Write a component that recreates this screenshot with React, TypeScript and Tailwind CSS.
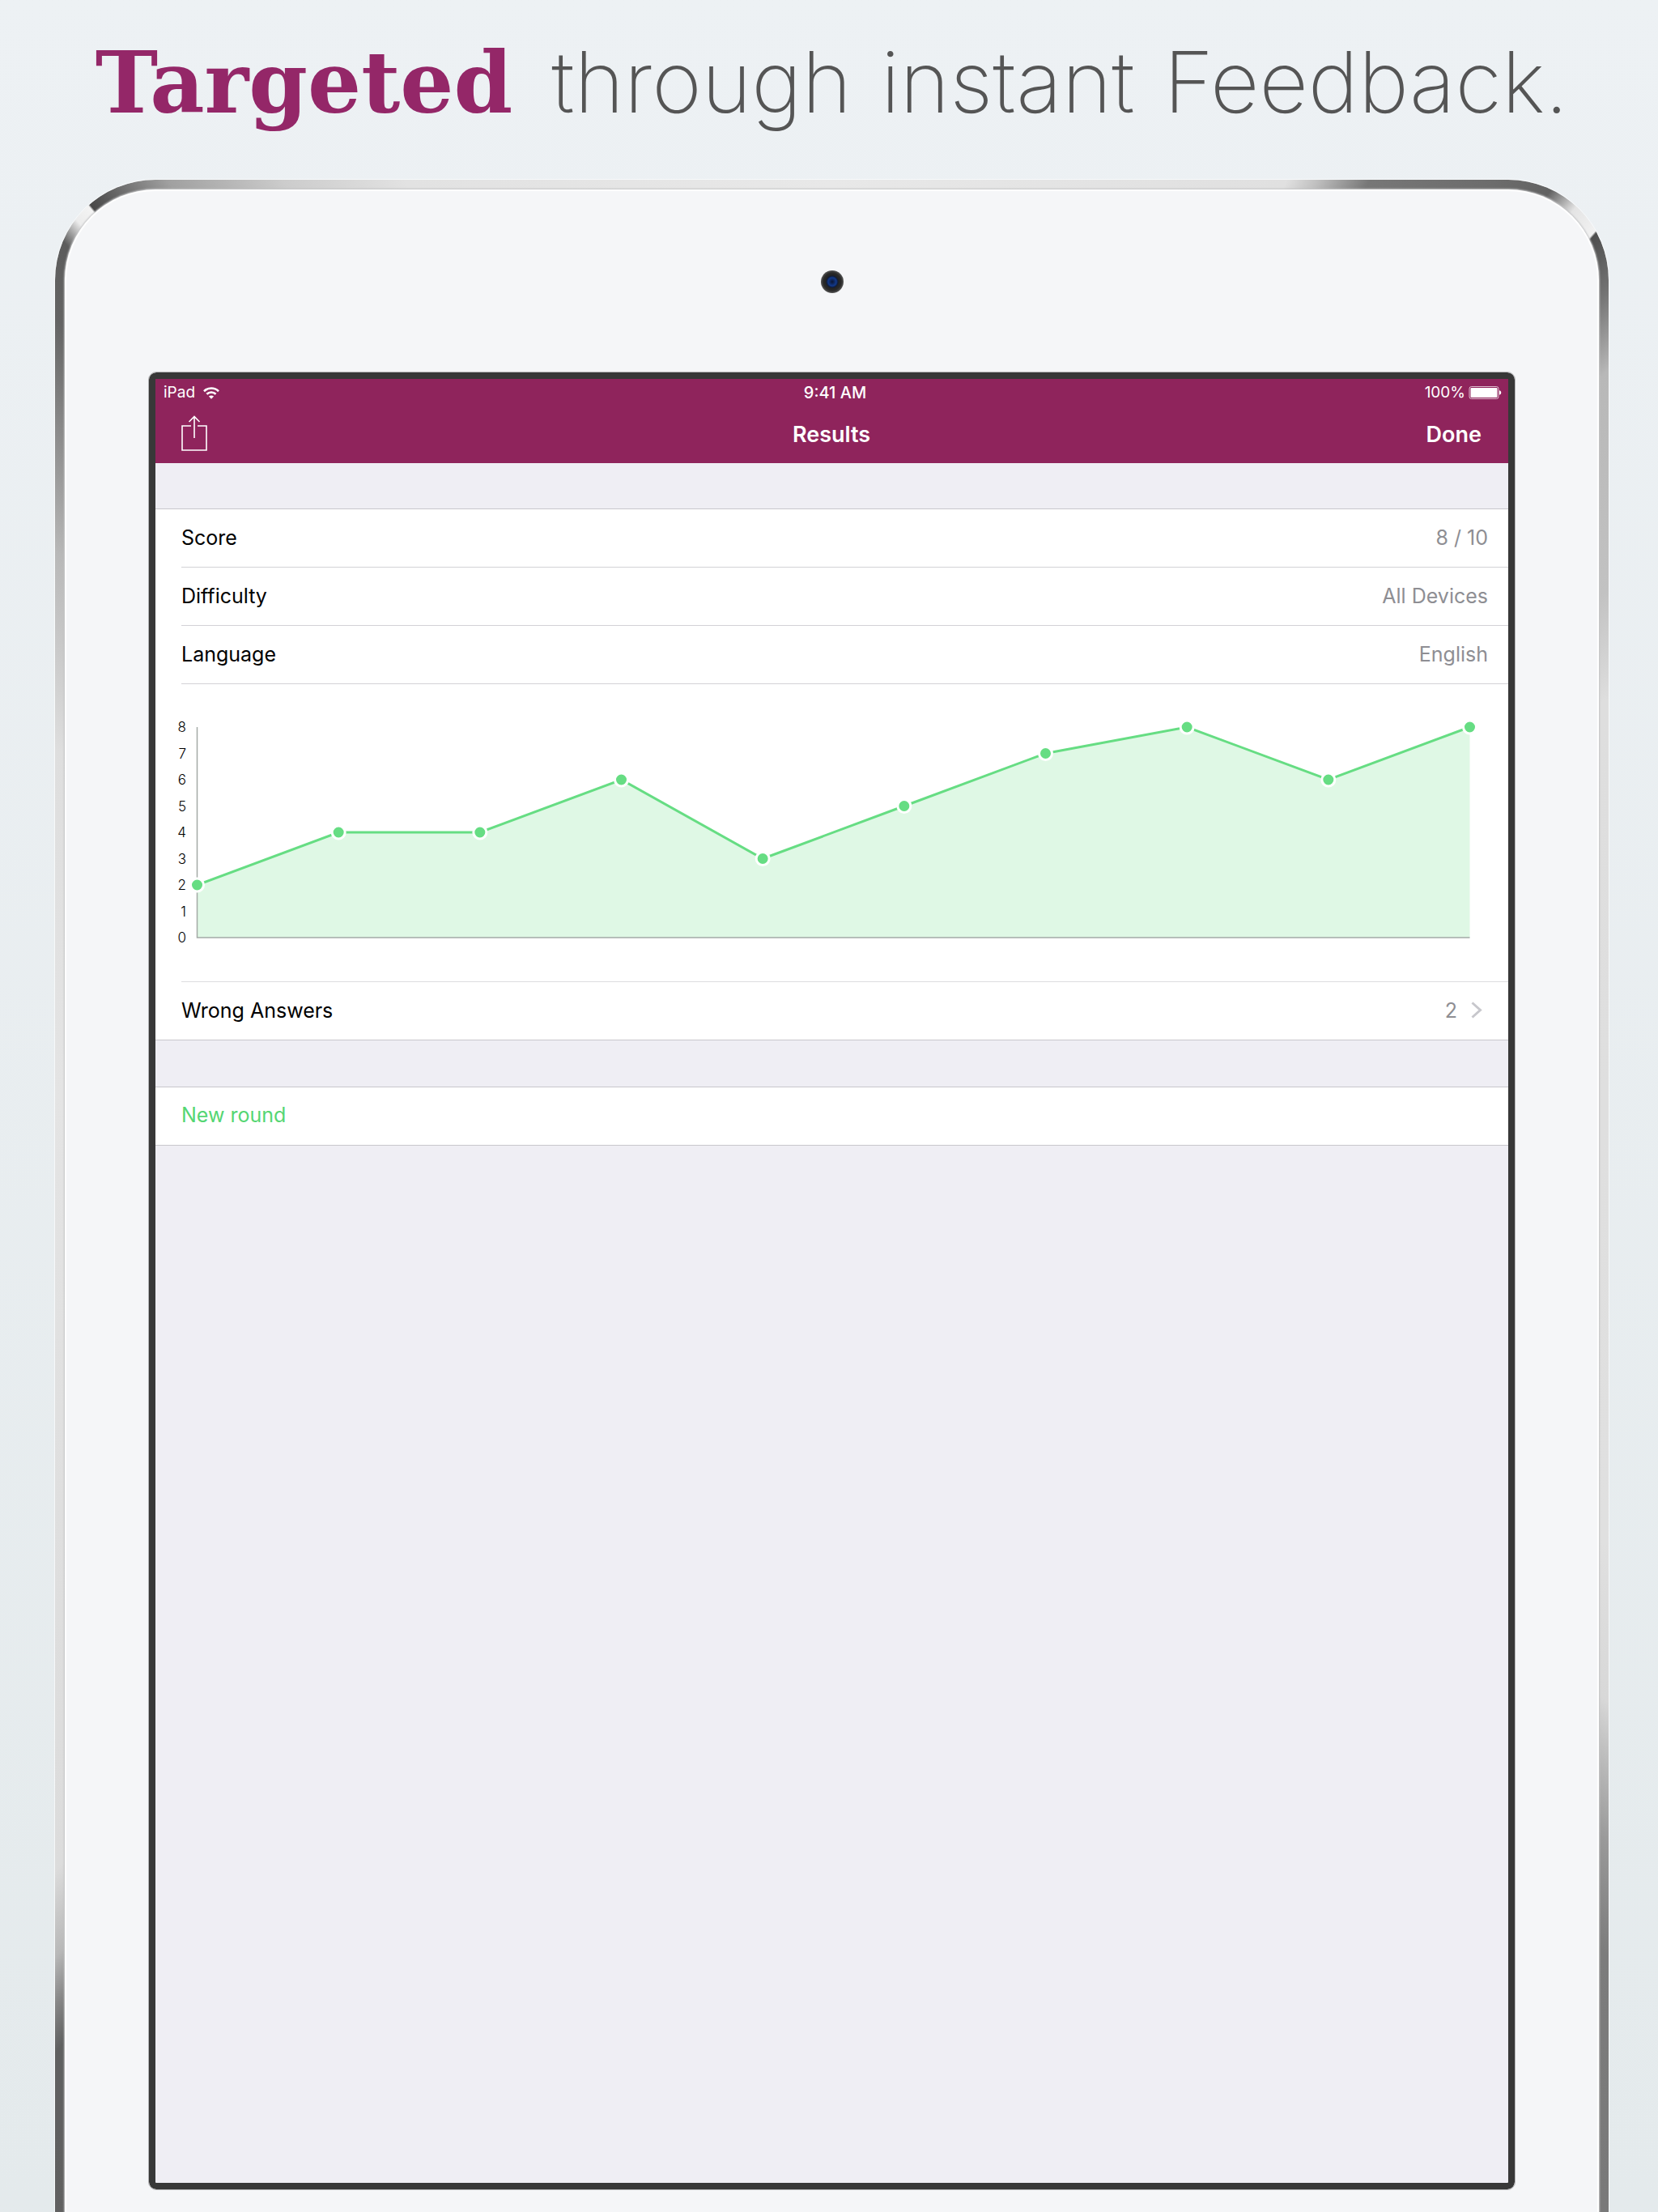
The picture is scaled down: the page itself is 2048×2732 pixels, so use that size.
import React from "react";

const scores = [2, 4, 4, 6, 3, 5, 7, 8, 6, 8];
const maxScore = 8;
const ticks = [8, 7, 6, 5, 4, 3, 2, 1, 0];

const CHART_W = 1572;
const CHART_H = 260;
const points = scores.map((s, i) => ({
  x: (i * CHART_W) / (scores.length - 1),
  y: CHART_H - (s * CHART_H) / maxScore,
}));
const linePath = points.map((p, i) => `${i ? "L" : "M"}${p.x} ${p.y}`).join(" ");
const areaPath = `${linePath} L${CHART_W} ${CHART_H} L0 ${CHART_H} Z`;

function Headline() {
  return (
    <h1 className="flex h-[222px] items-baseline justify-center whitespace-nowrap pt-[26px] leading-[150px] text-[#555]">
      <span className="font-['DejaVu_Serif'] text-[104px] font-bold text-[#942768]">Targeted</span>
      <span className="ml-12 flex gap-9 font-[Inter] text-[105px] font-extralight">
        <span>through</span>
        <span>instant</span>
        <span>Feedback.</span>
      </span>
    </h1>
  );
}

function StatusBar() {
  return (
    <div className="grid h-[34px] grid-cols-3 items-center pl-2.5 pr-2 text-[19px] leading-6 text-white">
      <div className="flex items-center gap-2.5">
        <span>iPad</span>
        <svg width="20" height="15" viewBox="0 0 20 15" fill="none" stroke="#fff" strokeWidth="2.6" aria-label="Wi-Fi">
          <path d="M1 5.2C6 .3 14 .3 19 5.2" />
          <path d="M4.4 8.7c3.1-3 8.100-3 11.200 0" />
          <path d="M10 14.800 6.900 11.600c1.700-1.500 4.500-1.500 6.200 0Z" fill="#fff" stroke="none" />
        </svg>
      </div>
      <div className="pl-1.5 text-center text-[20px] font-medium">9:41 AM</div>
      <div className="flex items-center justify-end gap-1">
        <span>100%</span>
        <svg width="41" height="16" viewBox="0 0 41 16" aria-label="Battery full">
          <rect x="1" y="0.500" width="36" height="15" rx="2.500" fill="none" stroke="#fff" strokeOpacity="0.7" />
          <rect x="2.500" y="2" width="33" height="12" rx="1" fill="#fff" />
          <path d="M38 5.300c3 .4 3 5 0 5.400Z" fill="#fff" />
        </svg>
      </div>
    </div>
  );
}

function NavBar() {
  return (
    <div className="grid h-[70px] grid-cols-3 items-center pl-8 pr-[33px] text-[27px] font-semibold text-white">
      <button type="button" aria-label="Share" className="justify-self-start pb-1">
        <svg width="33" height="44" viewBox="0 0 33 44" fill="none" stroke="#fff" strokeWidth="1.600">
          <path d="M12 13H1v30h30V13H20" />
          <path d="M16 28V1.500M9.500 8 16 1.500 22.500 8" />
        </svg>
      </button>
      <h2 className="text-center">Results</h2>
      <button type="button" className="justify-self-end">Done</button>
    </div>
  );
}

function Row({ label, value }: { label: string; value: string }) {
  return (
    <div className="flex h-[72px] items-center justify-between border-b border-[#d3d2d6] pb-0.5 pr-[25px]">
      <dt>{label}</dt>
      <dd className="text-[#8e8e93]">{value}</dd>
    </div>
  );
}

function Chart() {
  return (
    <figure className="flex h-[368px] border-b border-[#dcdce0] pr-[47px] pt-[53px]">
      <div className="-ml-2 flex h-[260px] w-[27px] shrink-0 flex-col justify-between">
        {ticks.map((t) => (
          <span key={t} className="flex h-0 w-3.5 items-center justify-end text-[17px] font-light leading-4">
            {t}
          </span>
        ))}
      </div>
      <svg
        className="h-[260px] w-full overflow-visible"
        viewBox={`0 0 ${CHART_W} ${CHART_H}`}
        role="img"
        aria-label="Score history"
      >
        <path d={areaPath} fill="#dff8e5" />
        <path d={`M0 0V${CHART_H}H${CHART_W}`} fill="none" stroke="#a4aaa6" strokeWidth="1.500" />
        <path d={linePath} fill="none" stroke="#66dd83" strokeWidth="3" />
        {points.map((p, i) => (
          <circle key={i} cx={p.x} cy={p.y} r="8" fill="#66dd83" stroke="#fff" strokeWidth="3" />
        ))}
      </svg>
    </figure>
  );
}

export default function App() {
  return (
    <main className="flex min-h-screen flex-col bg-linear-to-b from-[#edf1f4] to-[#e4eaec] pl-[68px] pr-[61px] font-[Inter]">
      <Headline />
      <section className="flex flex-1 flex-col rounded-t-[124px] bg-[conic-gradient(from_0deg_at_959px_1130px,#e8e8e8_0deg,#e0e0e0_26.500deg,#c0c0c0_28deg,#777_30.500deg,#6c6c6c_36deg,#626262_38.500deg,#e4e4e4_40deg,#f2f2f2_41.500deg,#4e4e4e_41.600deg,#747474_44deg,#b8b8b8_47deg,#c2c2c2_57deg,#dedede_63deg,#e0e0e0_120deg,#d8d8d8_128deg,#999_134deg,#7c7c7c_138deg,#777_150deg,#606060_217deg,#5f6060_219deg,#888_220.500deg,#b8b8b8_222deg,#dcdcdc_225deg,#e4e4e4_270deg,#dedede_294deg,#b8b8b8_305deg,#888_311deg,#646464_315deg,#5c5c5c_318deg,#ececec_319.200deg,#f4f4f4_320.100deg,#484848_320.200deg,#707070_322deg,#a0a0a0_324deg,#ccc_329deg,#e2e2e2_335deg,#e8e8e8_360deg)] px-3 pt-3 outline outline-white/60">
        <div className="flex flex-1 flex-col rounded-t-[112px] border-x-2 border-t-2 border-white bg-[#f5f6f8] px-[102px] pb-7 shadow-[0_0_2px_1px_#c4c5c7]">
          <div className="flex h-[224px] items-center justify-center">
            <span
              aria-label="Camera"
              className="size-7 rounded-full bg-[radial-gradient(circle_at_50%_50%,#0b1430_0px,#12398a_5px,#101c3a_7px,#232323_8px,#2a2a2a_11px,#555_14px)]"
            />
          </div>
          <div className="flex flex-1 flex-col rounded-[9px] border-8 border-[#383838] bg-[#efeef4] outline outline-[#b4b4b6]">
            <header className="bg-[#8f245c]">
              <StatusBar />
              <NavBar />
            </header>
            <div className="mt-14 border-y border-[#c8c7cc] bg-white pl-8 text-[25px] leading-8 text-black">
              <dl>
                <Row label="Score" value="8 / 10" />
                <Row label="Difficulty" value="All Devices" />
                <Row label="Language" value="English" />
              </dl>
              <Chart />
              <button type="button" className="flex h-[71px] w-full items-center justify-between pb-0.5 pr-8 text-left">
                <span>Wrong Answers</span>
                <span className="flex items-center gap-[17px] text-[#8e8e93]">
                  2
                  <svg width="14" height="21" viewBox="0 0 14 21" fill="none" stroke="#c7c7cc" strokeWidth="3">
                    <path d="M1.500 1.500 11.500 10.500 1.500 19.500" />
                  </svg>
                </span>
              </button>
            </div>
            <button
              type="button"
              className="mt-[57px] h-[73px] border-y border-[#c8c7cc] bg-white pb-0.5 pl-8 text-left text-[25px] text-[#55d673]"
            >
              New round
            </button>
          </div>
        </div>
      </section>
    </main>
  );
}
